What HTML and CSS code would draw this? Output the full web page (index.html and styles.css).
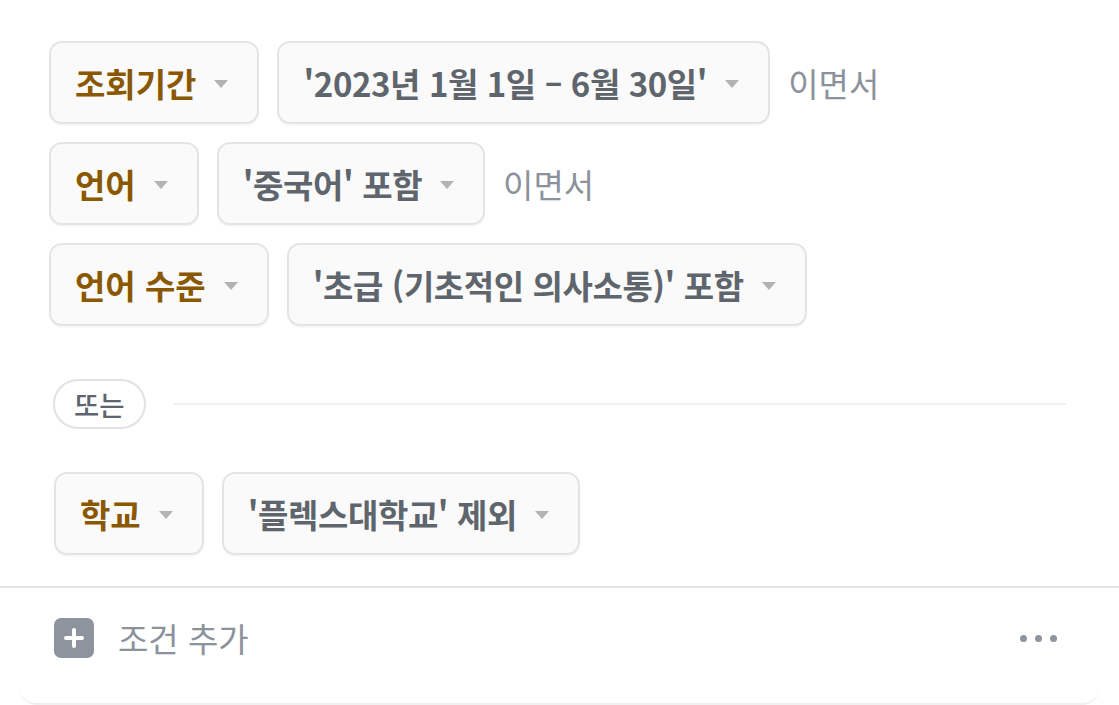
FILE: index.html
```html
<!DOCTYPE html>
<html lang="ko">
<head>
<meta charset="utf-8">
<link rel="stylesheet" href="styles.css">
</head>
<body>
<div class="panel">
  <div class="group">
    <div class="row">
      <div class="chip key">조회기간<span class="caret"></span></div>
      <div class="chip val">'2023년 1월 1일 – 6월 30일'<span class="caret"></span></div>
      <span class="joiner">이면서</span>
    </div>
    <div class="row">
      <div class="chip key">언어<span class="caret"></span></div>
      <div class="chip val">'중국어' 포함<span class="caret"></span></div>
      <span class="joiner">이면서</span>
    </div>
    <div class="row">
      <div class="chip key">언어 수준<span class="caret"></span></div>
      <div class="chip val">'초급 (기초적인 의사소통)' 포함<span class="caret"></span></div>
    </div>
  </div>
  <div class="or-row">
    <span class="or-pill">또는</span>
    <span class="or-line"></span>
  </div>
  <div class="group group-b">
    <div class="row">
      <div class="chip key">학교<span class="caret"></span></div>
      <div class="chip val">'플렉스대학교' 제외<span class="caret"></span></div>
    </div>
  </div>
</div>
<div class="footer">
  <div class="add">
    <span class="plus">
      <svg width="40" height="40" viewBox="0 0 40 40"><rect x="0" y="0" width="40" height="40" rx="7" fill="#8d949e"/><path d="M20 12v16M12 20h16" stroke="#fff" stroke-width="4" stroke-linecap="round"/></svg>
    </span>
    <span class="add-label">조건 추가</span>
  </div>
  <span class="more"><i></i><i></i><i></i></span>
</div>
</body>
</html>
```
FILE: styles.css
```css
html, body {
  margin: 0;
  padding: 0;
  background: #ffffff;
}
body {
  width: 1119px;
  height: 705px;
  overflow: hidden;
  font-family: "Noto Sans CJK KR", "Noto Sans", sans-serif;
}
.panel {
  padding: 41px 0 31px 49px;
  border-bottom: 2px solid #e5e5e5;
}
.group {
  display: flex;
  flex-direction: column;
  gap: 18px;
}
.group-b {
  margin-left: 5px;
}
.row {
  display: flex;
  align-items: center;
  gap: 18px;
}
.chip {
  height: 83px;
  box-sizing: border-box;
  border: 2px solid #e4e4e4;
  border-radius: 13px;
  background: #fafafa;
  padding: 0 29px 0 24px;
  display: flex;
  align-items: center;
  gap: 18px;
  font-size: 33px;
  font-weight: 700;
  white-space: nowrap;
  box-shadow: 0 2px 0 rgba(0, 0, 0, 0.03);
}
.key {
  color: #8a5800;
}
.val {
  color: #5f656c;
  letter-spacing: -0.4px;
}
.caret {
  width: 0;
  height: 0;
  border-left: 7.5px solid transparent;
  border-right: 7.5px solid transparent;
  border-top: 8px solid #b3b3b3;
  margin-top: 2px;
}
.joiner {
  font-size: 33px;
  font-weight: 400;
  color: #8b929b;
}
.or-row {
  display: flex;
  align-items: center;
  margin: 53px 53px 43px 4px;
  gap: 27px;
}
.or-pill {
  height: 50px;
  box-sizing: border-box;
  border: 2px solid #e2e2e2;
  border-radius: 25px;
  padding: 0 19px;
  display: flex;
  align-items: center;
  font-size: 27.5px;
  font-weight: 500;
  color: #5d6570;
}
.or-line {
  flex: 1;
  height: 2px;
  background: #f1f1f1;
}
.footer {
  height: 117px;
  box-sizing: border-box;
  margin: 0 19px;
  padding: 0 43px 15px 35px;
  display: flex;
  align-items: center;
  justify-content: space-between;
  border-bottom: 2px solid #f0f0f0;
  border-radius: 0 0 18px 18px;
}
.add {
  display: flex;
  align-items: center;
  gap: 24px;
}
.plus {
  display: flex;
  width: 40px;
  height: 40px;
}
.add-label {
  font-size: 33px;
  font-weight: 400;
  color: #8b929c;
}
.more {
  display: flex;
  gap: 8px;
}
.more i {
  width: 7px;
  height: 7px;
  border-radius: 50%;
  background: #8d949e;
}
```
